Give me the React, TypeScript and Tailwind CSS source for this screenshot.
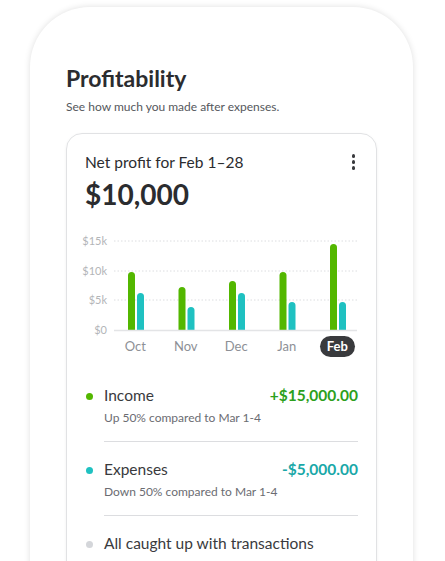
import React from 'react';

const font = { fontFamily: 'Lato, "Noto Sans", sans-serif' };

interface Month {
  label: string;
  income: number; // bar top in px from chart origin
  expense: number;
  active?: boolean;
}

// tops are in chart-local pixels (baseline at 99)
const months: Month[] = [
  { label: 'Oct', income: 41, expense: 62 },
  { label: 'Nov', income: 56, expense: 76 },
  { label: 'Dec', income: 50, expense: 62 },
  { label: 'Jan', income: 41, expense: 71 },
  { label: 'Feb', income: 13, expense: 71, active: true },
];

const ticks = [
  { label: '$15k', y: 10 },
  { label: '$10k', y: 40 },
  { label: '$5k', y: 69 },
  { label: '$0', y: 99 },
];

function bar(x: number, top: number, base: number, w = 7) {
  const r = 3.5;
  return `M${x} ${base} V${top + r} A${r} ${r} 0 0 1 ${x + w} ${top + r} V${base} Z`;
}

function Chart() {
  const base = 99;
  return (
    <div className="mt-[21px]">
      <svg width="272" height="101" viewBox="0 0 272 101" className="block overflow-visible">
        {ticks.map((t, i) => (
          <g key={t.label}>
            <text x="22" y={t.y + 4} textAnchor="end" fontSize="11" fill="#b3b5b8" fontFamily="Lato, sans-serif">
              {t.label}
            </text>
            {i < 3 && (
              <line x1="29" x2="272" y1={t.y} y2={t.y} stroke="#dcdde0" strokeWidth="1" strokeDasharray="1.5 2" />
            )}
          </g>
        ))}
        {months.map((m, i) => {
          const x = 43 + i * 50.5;
          return (
            <g key={m.label}>
              <path d={bar(x, m.income, base)} fill="#53b700" />
              <path d={bar(x + 9, m.expense, base)} fill="#1fc1c1" />
            </g>
          );
        })}
        <line x1="29" x2="272" y1={base + 0.5} y2={base + 0.5} stroke="#e3e4e6" strokeWidth="1.5" />
      </svg>
      <div className="flex pl-[25px] mt-[4px]">
        {months.map((m) => (
          <div key={m.label} className="w-[50.5px] shrink-0 flex justify-center">
            {m.active ? (
              <span className="h-[21px] px-[7px] rounded-full bg-[#393a3d] text-white text-[13px] font-bold leading-[21px]">
                {m.label}
              </span>
            ) : (
              <span className="h-[21px] text-[13px] leading-[21px] text-[#8d9096]">{m.label}</span>
            )}
          </div>
        ))}
      </div>
    </div>
  );
}

function LegendRow({
  dot,
  title,
  amount,
  amountColor,
  sub,
  divider,
}: {
  dot: string;
  title: string;
  amount?: string;
  amountColor?: string;
  sub: string;
  divider?: boolean;
}) {
  return (
    <div className="flex">
      <div className="w-[19px] pt-[8px]">
        <div className={`w-[7px] h-[7px] rounded-full ml-[1px] ${dot}`} />
      </div>
      <div className="flex-1">
        <div className="flex items-center justify-between h-[22px]">
          <span className="text-[15.5px] text-[#393a3d]">{title}</span>
          {amount && <span className={`text-[15.5px] font-bold ${amountColor}`}>{amount}</span>}
        </div>
        <div className="text-[12px] text-[#6b6c72] mt-[3px] leading-[16px] whitespace-nowrap">{sub}</div>
        {divider && <div className="h-px bg-[#dcdde0] mt-[15px] mb-[17px]" />}
      </div>
    </div>
  );
}

export default function App() {
  return (
    <div className="w-[445px] h-[561px] overflow-hidden bg-white" style={font}>
      <div className="ml-[30px] mt-[7px] w-[383px] h-[620px] rounded-t-[60px] bg-white shadow-[0_0_6px_rgba(0,0,0,0.13)] pl-[36px] pr-[36px] pt-[58px]">
        <h1 className="text-[23px] font-bold text-[#2b2c2f] leading-[26px]">Profitability</h1>
        <p className="text-[12px] text-[#55575c] mt-[8px] leading-[16px]">See how much you made after expenses.</p>
        <div className="mt-[18px] rounded-[16px] border border-[#e1e2e4] shadow-[0_1px_3px_rgba(0,0,0,0.06)] px-[18px] pt-[18px] pb-[20px]">
          <div className="flex items-start justify-between">
            <span className="text-[15.5px] text-[#2b2c2f] leading-[20px]">Net profit for Feb 1–28</span>
            <div className="flex flex-col gap-[2.5px] pt-[2px] mr-[3px]">
              <span className="w-[3.5px] h-[3.5px] rounded-full bg-[#393a3d]" />
              <span className="w-[3.5px] h-[3.5px] rounded-full bg-[#393a3d]" />
              <span className="w-[3.5px] h-[3.5px] rounded-full bg-[#393a3d]" />
            </div>
          </div>
          <div className="text-[28px] font-bold text-[#2b2c2f] leading-[32px] mt-[6px]">$10,000</div>
          <Chart />
          <div className="mt-[28px]">
            <LegendRow
              dot="bg-[#53b700]"
              title="Income"
              amount="+$15,000.00"
              amountColor="text-[#2ca01c]"
              sub="Up 50% compared to Mar 1-4"
              divider
            />
            <LegendRow
              dot="bg-[#1fc1c1]"
              title="Expenses"
              amount="-$5,000.00"
              amountColor="text-[#1aa8a8]"
              sub="Down 50% compared to Mar 1-4"
              divider
            />
            <LegendRow
              dot="bg-[#d4d6da]"
              title="All caught up with transactions"
              sub="Nice work! Your profitability is up to date."
            />
          </div>
        </div>
      </div>
    </div>
  );
}
